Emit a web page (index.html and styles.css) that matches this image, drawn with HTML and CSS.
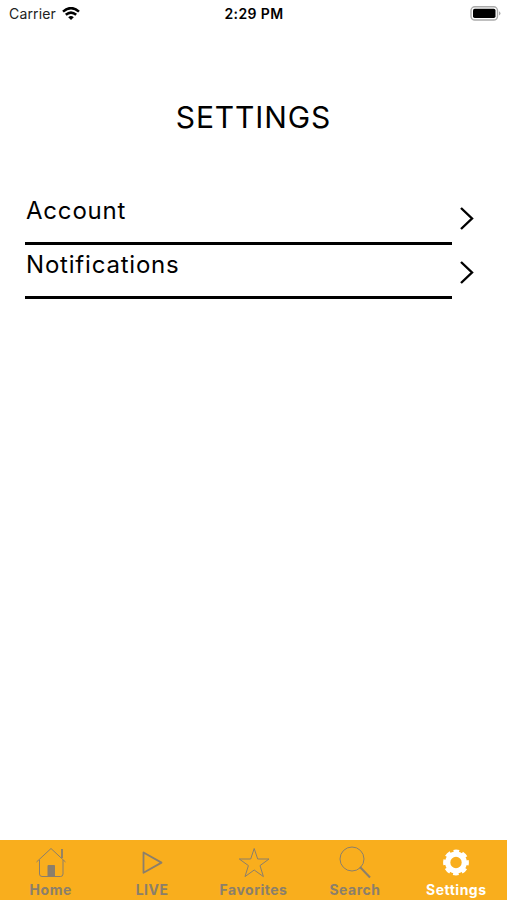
FILE: index.html
```
<!DOCTYPE html>
<html lang="en">
<head>
    <meta charset="UTF-8">
    <meta name="viewport" content="width=device-width, initial-scale=1.0">
    <title>Settings</title>
    <link rel="stylesheet" href="styles.css">
</head>
<body>

    <div class="status-bar">
        <div class="carrier">
            <span class="carrier-name">Carrier</span>
            <svg width="18" height="14" viewBox="0 0 18 14" fill="none" stroke="#000" stroke-width="2.5">
                <path d="M1 4.6Q9-2.4 17 4.6M3.8 7.8Q9 3.4 14.2 7.8"/>
                <path d="M6.2 10.2Q9 7.9 11.8 10.2L9 13.1Z" fill="#000" stroke="none"/>
            </svg>
        </div>
        <div class="time">2:29 PM</div>
        <div class="battery">
            <svg width="31" height="15" viewBox="0 0 31 15">
                <rect x="1" y=".8" width="26.5" height="13.2" rx="3.8" fill="#fff" stroke="#aaa" stroke-width="1.4"/>
                <rect x="3" y="2.8" width="22.5" height="9.2" rx="1.7" fill="#000"/>
                <path d="M29 5.2Q32 7.4 29 9.6Z" fill="#aaa"/>
            </svg>
        </div>
    </div>

    <h1>SETTINGS</h1>

    <div class="list">
        <div class="row">
            <div class="label">Account</div>
            <svg class="chevron" width="16" height="24" viewBox="0 0 16 24"><path d="M2 2L13 12.5L2 23"/></svg>
        </div>
        <div class="row">
            <div class="label">Notifications</div>
            <svg class="chevron" width="16" height="24" viewBox="0 0 16 24"><path d="M2 2L13 12.5L2 23"/></svg>
        </div>
    </div>

    <div class="tab-bar">
        <div class="tab">
            <svg width="34" height="34" viewBox="0 0 34 34">
                <path d="M2.5 16L17 2.5L31.5 16M5.5 14V28Q5.5 30.5 8 30.5H26.5Q29 30.5 29 28V14"/>
                <path d="M28 12V3" stroke-width="1.8"/>
                <path d="M14 30V19.5H20.5V30Z" class="solid"/>
            </svg>
            <span>Home</span>
        </div>
        <div class="tab">
            <svg width="34" height="34" viewBox="0 0 34 34">
                <path d="M8.5 6.5V26.8L26.5 16.6Z" stroke-width="1.8" stroke-linejoin="round"/>
            </svg>
            <span>LIVE</span>
        </div>
        <div class="tab">
            <svg width="34" height="34" viewBox="0 0 34 34">
                <path d="M17.2 2.5L20.7 13H32L23 19.6L26.4 30.6L17.2 24L8 30.6L11.4 19.6L2.3 13H13.7Z"/>
            </svg>
            <span>Favorites</span>
        </div>
        <div class="tab">
            <svg width="34" height="34" viewBox="0 0 34 34">
                <circle cx="14" cy="13" r="12"/>
                <path d="M22 21L32 31.5" stroke-width="2"/>
            </svg>
            <span>Search</span>
        </div>
        <div class="tab active">
            <svg width="34" height="34" viewBox="0 0 34 34">
                <circle cx="17" cy="16.5" r="8.3" class="ring"/>
                <!-- gear teeth -->
                <circle cx="17" cy="16.5" r="11" class="teeth"/>
            </svg>
            <span>Settings</span>
        </div>
    </div>

</body>
</html>
```

FILE: styles.css
```
* {
    box-sizing: border-box;
}
body {
    margin: 0;
    height: 900px;
    display: flex;
    flex-direction: column;
    overflow: hidden;
    background-color: #fff;
    color: #000;
    font-family: Inter, "Liberation Sans", sans-serif;
}
svg {
    display: block;
    flex-shrink: 0;
}
.status-bar {
    display: grid;
    grid-template-columns: 1fr 1fr 1fr;
    align-items: center;
    height: 27px;
    padding: 0 6px 0 9px;
    font-size: 14px;
}
.carrier {
    display: flex;
    align-items: center;
    gap: 6px;
}
.carrier-name {
    color: #222;
    letter-spacing: 0.15px;
}
.time {
    text-align: center;
    font-weight: 600;
    letter-spacing: 0.4px;
    margin-left: -2px;
}
.battery {
    display: flex;
    justify-content: flex-end;
}
h1 {
    margin: 71px 0 0;
    height: 38px;
    line-height: 38px;
    text-align: center;
    font-size: 30px;
    font-weight: 400;
    letter-spacing: 0.9px;
}
.list {
    margin-top: 55px;
    padding-left: 25px;
}
.row {
    display: flex;
    height: 54px;
}
.label {
    width: 427px;
    border-bottom: 3px solid #000;
    padding-left: 1px;
    font-size: 24px;
    font-weight: 400;
    line-height: 40px;
    letter-spacing: 0.8px;
}
.chevron {
    margin: 15px 0 0 7px;
    fill: none;
    stroke: #000;
    stroke-width: 2.4;
}
.tab-bar {
    display: flex;
    height: 60px;
    margin-top: auto;
    background-color: #f9ae1d;
}
.tab {
    flex: 1;
    display: flex;
    flex-direction: column;
    align-items: center;
    padding-top: 6px;
    color: #8b7f6b;
    font-size: 14px;
    font-weight: 700;
    line-height: 20px;
    letter-spacing: 0.5px;
}
.tab svg {
    fill: none;
    stroke: currentColor;
    stroke-width: 1;
}
.tab .solid {
    fill: currentColor;
}
.tab .ring {
    stroke-width: 5.2;
}
.tab .teeth {
    stroke-width: 3.8;
    stroke-dasharray: 5.4 3.239;
    stroke-dashoffset: 2.7;
}
.active {
    color: #fff;
}
```
